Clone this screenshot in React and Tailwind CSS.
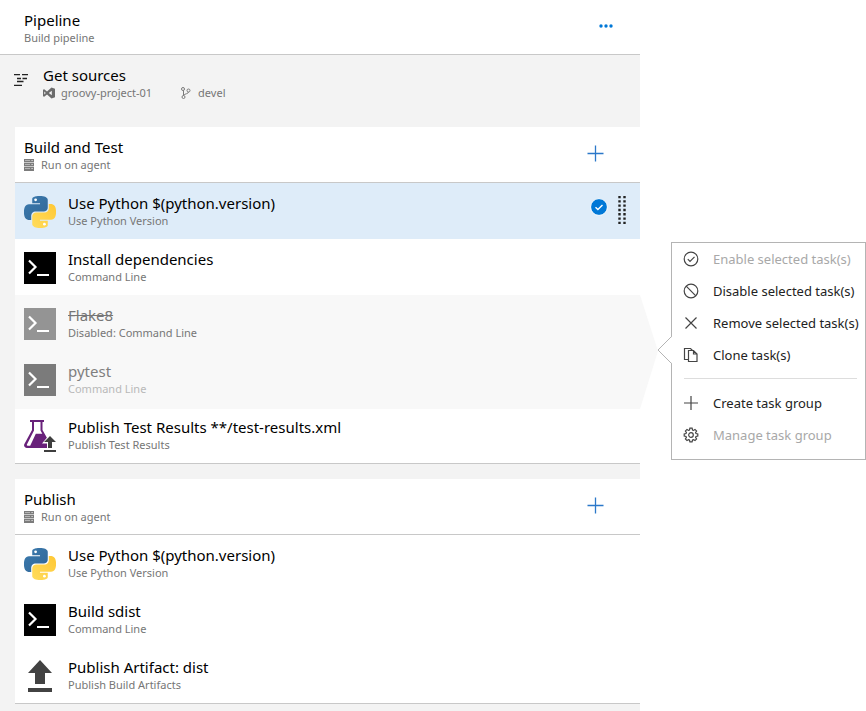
const UI = "font-['Noto_Sans','Open_Sans',sans-serif]";

function PythonIcon() {
  return (
    <svg viewBox="0 0 24 24" className="size-8" aria-hidden="true">
      <defs>
        <linearGradient id="pyBlue" x1="0" y1="0" x2="1" y2="1">
          <stop offset="0" stopColor="#3b7bae" />
          <stop offset="1" stopColor="#316698" />
        </linearGradient>
        <linearGradient id="pyGold" x1="0" y1="1" x2="1" y2="0">
          <stop offset="0" stopColor="#ffdc5c" />
          <stop offset="1" stopColor="#ffc836" />
        </linearGradient>
      </defs>
      <path fill="url(#pyBlue)" d="M14.25.18l.9.2.73.26.59.3.45.32.34.34.25.34.16.33.1.3.04.26.02.2-.01.13V8.5l-.05.63-.13.55-.21.46-.26.38-.3.31-.33.25-.35.19-.35.14-.33.1-.3.07-.26.04-.21.02H8.77l-.69.05-.59.14-.5.22-.41.27-.33.32-.27.35-.2.36-.15.37-.1.35-.07.32-.04.27-.02.21v3.06H3.17l-.21-.03-.28-.07-.32-.12-.35-.18-.36-.26-.36-.36-.35-.46-.32-.59-.28-.73-.21-.88-.14-1.05-.05-1.23.06-1.22.16-1.04.24-.87.32-.71.36-.57.4-.44.42-.33.42-.24.4-.16.36-.1.32-.05.24-.01h.16l.06.01h8.16v-.83H6.18l-.01-2.75-.02-.37.05-.34.11-.31.17-.28.25-.26.31-.23.38-.2.44-.18.51-.15.58-.12.64-.1.71-.06.77-.04.84-.02 1.27.05z" />
      <path fill="url(#pyGold)" d="M21.04 6.11l.28.06.32.12.35.18.36.27.36.35.35.47.32.59.28.73.21.88.14 1.04.05 1.23-.06 1.23-.16 1.04-.24.86-.32.71-.36.57-.4.45-.42.33-.42.24-.4.16-.36.09-.32.05-.24.02-.16-.01h-8.22v.82h5.84l.01 2.76.02.36-.05.34-.11.31-.17.29-.25.25-.31.24-.38.2-.44.17-.51.15-.58.13-.64.09-.71.07-.77.04-.84.01-1.27-.04-1.07-.14-.9-.2-.73-.25-.59-.3-.45-.33-.34-.34-.25-.34-.16-.33-.1-.3-.04-.25-.02-.2.01-.13v-5.34l.05-.64.13-.54.21-.46.26-.38.3-.32.33-.24.35-.2.35-.14.33-.1.3-.06.26-.04.21-.02.13-.01h5.84l.69-.05.59-.14.5-.21.41-.28.33-.32.27-.35.2-.36.15-.36.1-.35.07-.32.04-.28.02-.21V6.07h2.09l.14.01z" />
      <circle cx="8.7" cy="2.9" r="1.05" fill="#fff" />
      <circle cx="15.3" cy="21.1" r="1.05" fill="#fff" />
    </svg>
  );
}

function CommandIcon({ fill = "#000000" }) {
  return (
    <svg viewBox="0 0 32 32" className="size-8" aria-hidden="true">
      <rect width="32" height="32" fill={fill} />
      <path d="M5 8.500l6.500 6.500L5 21.500" fill="none" stroke="#fff" strokeWidth="2.200" />
      <path d="M13 22h12v2H13z" fill="#fff" />
    </svg>
  );
}

function FlaskIcon() {
  return (
    <svg viewBox="0 0 32 32" className="size-8" aria-hidden="true">
      <path d="M6 0h14v2h-1.500v8L27 25l-1 3H3C.6 28-.6 25.800.4 24L8 10V2H6z" fill="#68217a" />
      <path d="M10 2h6.500v8.500l1.800 3.300h-6.500L6.200 25.800H3.600c-.6 0-1-.6-.7-1.200L10 10.500z" fill="#fff" />
      <path d="M26 14l8 8.500V32H18v-3h5v-5.500h-5z" fill="#fff" />
      <path d="M26 16l6 6h-4v6h-4v-6h-4zM20 30h12v2H20z" fill="#3e3e3e" />
    </svg>
  );
}

function UploadIcon() {
  return (
    <svg viewBox="0 0 32 32" className="size-8" aria-hidden="true">
      <path d="M16 0l12 13h-7v11H11V13H4zM4 28h24v4H4z" fill="#424242" />
    </svg>
  );
}

function SourcesIcon() {
  return (
    <svg viewBox="0 0 14 12" className="h-3 w-3.5" aria-hidden="true">
      <path d="M0 .5h6M8 .5h6M3 4.500h4M8.500 4.500h4.500M3 7.500h6.500M0 11.500h8" stroke="#222" strokeWidth="1.400" />
    </svg>
  );
}

function VisualStudioIcon() {
  return (
    <svg viewBox="0 0 12 12" className="size-3" aria-hidden="true">
      <path fillRule="evenodd" d="M8.500.5L12 1.800v8.400l-3.500 1.300L4 7.600 1.200 9.800 0 9.200V2.800l1.200-.6L4 4.400zM1.300 4.500v3L2.800 6zM8.800 3.700L5.800 6l3 2.300z" fill="#6b6b6b" />
    </svg>
  );
}

function BranchIcon() {
  return (
    <svg viewBox="0 0 10 12" className="h-3 w-2.5" aria-hidden="true">
      <g fill="none" stroke="#7a7a7a">
        <circle cx="2" cy="2" r="1.500" />
        <circle cx="7.500" cy="3.500" r="1.500" />
        <circle cx="2.500" cy="10" r="1.500" />
        <path d="M2.500 3.500v5M7.500 5c0 2-4 1.500-5 3.500" />
      </g>
    </svg>
  );
}

function ServerIcon() {
  return (
    <svg viewBox="0 0 10 12" className="h-3 w-2.5" aria-hidden="true">
      <path d="M0 0h10v3H0zM0 4h10v3H0zM0 8h10v4H0z" fill="#7c7c7c" />
      <path d="M0 3.500h10M0 7.500h10" stroke="#c8c8c8" />
      <path d="M1 1.500h5M1 5.500h5M1 9.500h5" stroke="#b4b4b4" />
      <path d="M7.500 1.500h1.200M7.500 5.500h1.200M7.500 9.500h1.200" stroke="#e4e4e4" />
    </svg>
  );
}

function Labels({ title, children, titleClass = "text-black", subClass = "text-[#767676]" }) {
  return (
    <div className="min-w-0 flex-1">
      <div className={`text-[15px] leading-5 ${titleClass}`}>{title}</div>
      <div className={`flex items-center text-[11px] leading-4 ${subClass}`}>{children}</div>
    </div>
  );
}

function Task({ icon, title, sub, selected, titleClass, subClass, children }) {
  return (
    <li className={`flex h-14 items-start pr-3.5 pl-[9px] pt-2.5 ${selected ? "bg-[#deecf9]" : ""}`}>
      <div className="mr-3 pt-[3px]">{icon}</div>
      <Labels title={title} titleClass={titleClass} subClass={subClass}>{sub}</Labels>
      {children}
    </li>
  );
}

function Phase({ title, children }) {
  return (
    <section className="mb-[15px] ml-[15px] border-b border-[#c8c8c8] bg-white">
      <header className="flex h-14 items-start border-b border-[#c8c8c8] pr-9 pl-[9px] pt-2.5">
        <Labels title={title}>
          <ServerIcon />
          <span className="ml-[7px]">Run on agent</span>
        </Labels>
        <button type="button" aria-label={`Add a task to ${title}`} className="mt-2 text-[#2b78c9]">
          <svg viewBox="0 0 17 17" className="size-[17px]" fill="none" stroke="currentColor" strokeWidth="1.300" aria-hidden="true">
            <path d="M8.500 .5v16M.5 8.500h16" />
          </svg>
        </button>
      </header>
      <ul>{children}</ul>
    </section>
  );
}

const glyphs = {
  enable: (
    <>
      <circle cx="8" cy="8" r="6.800" />
      <path d="M4.800 8.200l2.200 2.300 4.500-4.700" />
    </>
  ),
  disable: (
    <>
      <circle cx="8" cy="8" r="6.800" />
      <path d="M3.200 3.200l9.600 9.600" />
    </>
  ),
  remove: <path d="M2.500 2.500l11 11M13.500 2.500l-11 11" />,
  clone: (
    <>
      <path d="M5 12.500H1.500V1.500h6l2 2" />
      <path d="M5.500 3.500h5l3.500 3.500v7.500H5.500zM10.500 3.500V7H14" />
    </>
  ),
  create: <path d="M8 1v14M1 8h14" />,
  manage: (
    <>
      <circle cx="8" cy="8" r="2.300" />
      <path d="M6.900 1.200h2.200l.4 1.800 1 .4 1.500-1 1.600 1.600-1 1.500.4 1 1.800.4v2.200l-1.800.4-.4 1 1 1.500-1.600 1.600-1.500-1-1 .4-.4 1.800H6.900l-.4-1.800-1-.4-1.500 1L2.400 12l1-1.500-.4-1-1.800-.4V6.900L3 6.500l.4-1-1-1.500L4 2.400l1.500 1 1-.4z" />
    </>
  ),
};

function MenuItem({ glyph, label, disabled }) {
  return (
    <li>
      <button
        type="button"
        disabled={disabled}
        className={`flex h-8 w-full items-center gap-3.5 pl-[11px] text-left text-[13px] whitespace-nowrap ${disabled ? "text-[#a8a8a8]" : "text-[#222222]"}`}
      >
        <svg viewBox="0 0 16 16" className="mb-0.5 size-4 shrink-0 text-[#444444]" fill="none" stroke="currentColor" strokeWidth="1.200" aria-hidden="true">
          {glyphs[glyph]}
        </svg>
        {label}
      </button>
    </li>
  );
}

function TaskMenu() {
  return (
    <div className="absolute -top-[53px] left-full z-10 ml-[31px] w-[195px] border border-[#b4b4b4] bg-white pt-px pb-[7px]">
      <svg viewBox="0 0 15 28" className="absolute top-[93px] -left-[15px] h-7 w-[15px]" aria-hidden="true">
        <path d="M15 .5L1 14l14 13.500z" fill="#fff" />
        <path d="M14.500 .5L1 14l13.500 13.500" fill="none" stroke="#b4b4b4" />
      </svg>
      <ul>
        <MenuItem glyph="enable" label="Enable selected task(s)" disabled />
        <MenuItem glyph="disable" label="Disable selected task(s)" />
        <MenuItem glyph="remove" label="Remove selected task(s)" />
        <MenuItem glyph="clone" label="Clone task(s)" />
        <li role="separator" className="mt-1.5 mr-2 mb-[9px] ml-3 h-px bg-[#dddddd]" />
        <MenuItem glyph="create" label="Create task group" />
        <MenuItem glyph="manage" label="Manage task group" disabled />
      </ul>
    </div>
  );
}

export default function App() {
  return (
    <div className={`min-h-screen overflow-x-hidden bg-white ${UI}`}>
      <main className="mr-[226px] min-h-screen bg-[#f3f3f3]">
        <header className="flex h-[55px] items-start border-b border-[#c8c8c8] bg-white pr-[27px] pl-6 pt-2.5">
          <Labels title="Pipeline">Build pipeline</Labels>
          <button type="button" aria-label="More actions" className="mt-3.5 text-[#0078d7]">
            <svg viewBox="0 0 14 4" className="block h-1 w-3.5" fill="currentColor" aria-hidden="true">
              <circle cx="2" cy="2" r="1.700" />
              <circle cx="7" cy="2" r="1.700" />
              <circle cx="12" cy="2" r="1.700" />
            </svg>
          </button>
        </header>

        <section className="flex h-[72px] items-start gap-[15px] pt-2.5 pl-3.5">
          <div className="pt-[9px]">
            <SourcesIcon />
          </div>
          <Labels title="Get sources">
            <VisualStudioIcon />
            <span className="mr-[29px] ml-1.5">groovy-project-01</span>
            <BranchIcon />
            <span className="ml-[7px]">devel</span>
          </Labels>
        </section>

        <Phase title="Build and Test">
          <Task icon={<PythonIcon />} title="Use Python $(python.version)" sub="Use Python Version" selected>
            <div className="flex items-start gap-2.5">
              <svg viewBox="0 0 18 18" className="mt-[5px] size-4.5" role="img" aria-label="Selected">
                <circle cx="9" cy="9" r="8.400" fill="#0078d7" stroke="#fff" />
                <path d="M5.500 9.200l2.400 2.300 4.600-4.600" fill="none" stroke="#fff" strokeWidth="1.400" />
              </svg>
              <svg viewBox="0 0 8 28" className="mt-[3px] h-7 w-2" aria-hidden="true">
                <path d="M1.500 0v28M6.500 0v28" fill="none" stroke="#222" strokeWidth="2.400" strokeDasharray="2.300 1.980" />
              </svg>
            </div>
          </Task>
          <Task icon={<CommandIcon />} title="Install dependencies" sub="Command Line" />
          <li className="relative -mb-0.5 bg-[#f8f8f8] pb-0.5">
            <ul>
              <Task
                icon={<CommandIcon fill="#949494" />}
                title="Flake8"
                sub="Disabled: Command Line"
                titleClass="text-[#767676] line-through"
              />
              <Task
                icon={<CommandIcon fill="#7b7b7b" />}
                title="pytest"
                sub="Command Line"
                titleClass="text-[#7f7f7f]"
                subClass="text-[#b8b8b8]"
              />
            </ul>
            <svg viewBox="0 0 18 114" className="absolute top-0 left-full h-full w-[18px]" aria-hidden="true">
              <path d="M0 0l18 56L0 114z" fill="#f8f8f8" />
            </svg>
            <TaskMenu />
          </li>
          <Task icon={<FlaskIcon />} title="Publish Test Results **/test-results.xml" sub="Publish Test Results" />
        </Phase>

        <Phase title="Publish">
          <Task icon={<PythonIcon />} title="Use Python $(python.version)" sub="Use Python Version" />
          <Task icon={<CommandIcon />} title="Build sdist" sub="Command Line" />
          <Task icon={<UploadIcon />} title="Publish Artifact: dist" sub="Publish Build Artifacts" />
        </Phase>
      </main>
    </div>
  );
}
